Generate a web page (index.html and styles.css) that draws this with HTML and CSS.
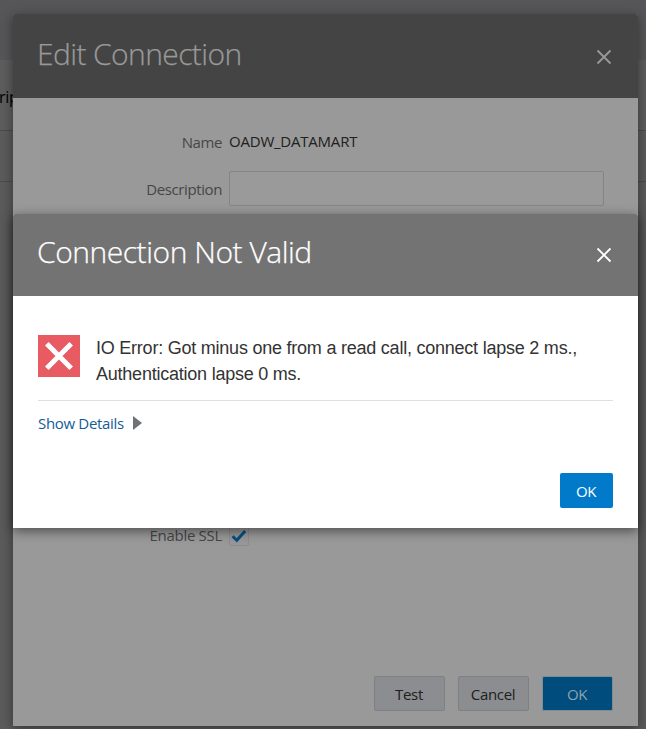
FILE: index.html
```html
<!DOCTYPE html>
<html lang="en">
<head>
<meta charset="utf-8">
<title>Edit Connection</title>
<link rel="stylesheet" href="styles.css">
</head>
<body>
<div class="page">
  <div class="page-bar"></div>
  <div class="page-columns"><span>rip</span></div>
  <div class="page-row"></div>
</div>

<section class="dialog edit">
  <header class="dialog-header">
    <h1 class="title">Edit Connection</h1>
    <svg class="close" viewBox="0 0 16 16"><path d="M1.5 1.5 14.5 14.5M14.5 1.5 1.5 14.5"/></svg>
  </header>
  <div class="form">
    <div class="field name-field"><label>Name</label><span class="value">OADW_DATAMART</span></div>
    <div class="field"><label>Description</label><input class="input" type="text"></div>
    <div class="field ssl-field"><label>Enable SSL</label>
      <span class="checkbox"><svg viewBox="0 0 16 14"><path d="M1.6 7.2 5.8 11.3 14.2 2"/></svg></span>
    </div>
  </div>
  <footer class="actions">
    <button class="btn">Test</button>
    <button class="btn">Cancel</button>
    <button class="btn primary">OK</button>
  </footer>
</section>

<section class="dialog alert">
  <header class="dialog-header">
    <h1 class="title">Connection Not Valid</h1>
    <svg class="close" viewBox="0 0 16 16"><path d="M1.5 1.5 14.5 14.5M14.5 1.5 1.5 14.5"/></svg>
  </header>
  <div class="alert-body">
    <div class="message">
      <svg class="error-icon" viewBox="0 0 42 42"><rect width="42" height="42"/><path d="M8.8 8.8 33.2 33.2M33.2 8.8 8.8 33.2"/></svg>
      <p>IO Error: Got minus one from a read call, connect lapse 2 ms., Authentication lapse 0 ms.</p>
    </div>
    <a class="details"><span>Show Details</span><svg viewBox="0 0 9 14"><path d="M0 0 9 7 0 14Z"/></svg></a>
    <button class="btn">OK</button>
  </div>
</section>
</body>
</html>
```
FILE: styles.css
```css
* { box-sizing: border-box; }
body {
  margin: 0;
  height: 729px;
  overflow: hidden;
  position: relative;
  background: #5b5b5b;
  font: 15px/20px "Open Sans", "Noto Sans", sans-serif;
  letter-spacing: -.32px;
}
.page-bar { height: 60px; background: #565658; }
.page-columns {
  height: 71px;
  padding-top: 27px;
  border-bottom: 1px solid #4b4b4b;
  background: #5d5d5d;
  color: #000;
  font-size: 16px;
}
.page-columns span { margin-left: -1px; }
.page-row { height: 51px; border-bottom: 1px solid #4b4b4b; }

.dialog { position: absolute; left: 13px; width: 625px; display: flex; flex-direction: column; }
.edit { top: 14px; height: 712px; background: #999; box-shadow: 0 3px 12px rgba(0,0,0,.42); border-radius: 2px 2px 0 0; }
.alert { top: 214px; height: 314px; background: #fff; box-shadow: 0 3px 12px rgba(0,0,0,.5); border-radius: 2px 2px 0 0; }
.dialog-header {
  display: flex;
  align-items: center;
  justify-content: space-between;
  flex: none;
  padding: 0 26px 0 24px;
  border-radius: 2px 2px 0 0;
}
.edit .dialog-header { height: 84px; background: #444; color: #999; }
.alert .dialog-header { height: 82px; background: #737373; color: #fff; }
.title { margin: 0; font-size: 30px; line-height: 40px; font-weight: 300; letter-spacing: -.6px; white-space: nowrap; -webkit-text-stroke: .25px currentColor; }
.edit .title { margin-top: -4px; }
.alert .title { margin-top: -7px; letter-spacing: -.46px; }
.close { width: 16px; height: 16px; fill: none; stroke: currentColor; stroke-width: 1.8; margin-top: 2px; }
.alert .close { margin-top: 0; }

.form { flex: 1; padding-top: 27px; color: #464646; }
.field { display: grid; grid-template-columns: 209px 375px; column-gap: 7px; align-items: center; height: 35px; }
.name-field { margin-bottom: 11px; padding-bottom: 2px; }
label { text-align: right; letter-spacing: -.4px; padding-top: 1px; }
.value { color: #202020; letter-spacing: -.22px; margin-top: -1px; }
.input { width: 375px; height: 35px; border: 1px solid #858585; border-radius: 2px; background: #9a9a9a; }
.ssl-field { height: 20px; margin-top: 320px; }
.ssl-field label { padding: 0; margin-top: -2px; letter-spacing: -.3px; }
.checkbox { width: 20px; height: 20px; border: 1px solid #8c8c90; border-radius: 2px; display: grid; place-items: center; background: #98989a; }
.checkbox svg { width: 16px; height: 14px; fill: none; stroke: #084f82; stroke-width: 3; }

.actions { display: flex; justify-content: flex-end; gap: 13px; padding: 0 25px 15px; }
.btn {
  width: 71px;
  height: 35px;
  padding: 0 1px 0 0;
  border: 1px solid #7e8083;
  border-radius: 2px;
  background: #8b8d90;
  color: #202020;
  font: inherit;
  letter-spacing: inherit;
}
.primary { background: #004d7d; border-color: #7f8c94; color: #8fa2ad; }

.alert-body { flex: 1; display: flex; flex-direction: column; padding: 39px 25px 20px; }
.message { display: flex; gap: 16px; height: 66px; border-bottom: 1px solid #e0e0e0; }
.message p { margin: 0; width: 500px; font: 18px/26px "Liberation Sans", Arial, sans-serif; letter-spacing: -.23px; color: #333; }
.error-icon { width: 42px; height: 42px; flex: none; }
.error-icon rect { fill: #e95b63; }
.error-icon path { stroke: #fff; stroke-width: 5; }
.details { display: flex; align-items: center; gap: 9px; height: 20px; margin-top: 12px; color: #145c94; }
.details svg { width: 9px; height: 14px; fill: #6f7376; }
.alert-body .btn { width: 53px; margin: auto 0 0 auto; border: 0; background: #007ac9; color: #fff; }
```
